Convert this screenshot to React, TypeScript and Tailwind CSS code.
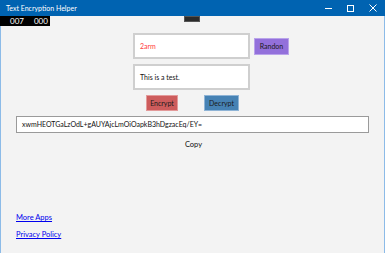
import { FC } from 'react'

const font = "[font-family:'Lato','Noto_Sans',sans-serif]"

const TitleBar: FC = () => (
    <div className="flex h-[16px] items-center bg-[#0063b1] text-white">
        <span className="pl-[6px] text-[7px] leading-none">Text Encryption Helper</span>
        <div className="ml-auto flex h-full items-center">
            {/* minimize */}
            <div className="flex h-full w-[22px] items-center justify-center">
                <div className="h-px w-[7px] bg-white" />
            </div>
            {/* maximize */}
            <div className="flex h-full w-[22px] items-center justify-center">
                <div className="h-[7px] w-[7px] border border-white" />
            </div>
            {/* close */}
            <div className="flex h-full w-[24px] items-center justify-center">
                <svg width="8" height="8" viewBox="0 0 8 8" stroke="white" strokeWidth="1">
                    <path d="M0.5 0.5 L7.5 7.5 M7.5 0.5 L0.5 7.5" />
                </svg>
            </div>
        </div>
    </div>
)

const App: FC = () => {
    return (
        <div className={`relative h-[253px] w-[385px] overflow-hidden bg-[#f3f3f3] ${font}`}>
            <TitleBar />
            <div className="flex h-[237px] flex-col border-x border-[#8cbbe8] text-[7px] text-[#111]">
                {/* key row */}
                <div className="mt-[17px] flex items-center">
                    <div className="ml-[132px] flex h-[26px] w-[117px] items-center border-2 border-[#cfcfcf] bg-white pl-[5px] text-[7px] text-[#ff3b3b]">
                        2arm
                    </div>
                    <button className="ml-[4px] h-[17px] w-[35px] border border-[#b9a3ea] bg-[#9370db] text-[7px] text-[#1a1a1a]">
                        Randon
                    </button>
                </div>
                {/* plain text */}
                <div className="ml-[132px] mt-[5px] flex h-[26px] w-[117px] items-center border-2 border-[#cfcfcf] bg-white pl-[5px] text-[7px]">
                    This is a test.
                </div>
                {/* actions */}
                <div className="mt-[5px] flex">
                    <button className="ml-[145px] h-[16px] w-[32px] border border-[#e39a9a] bg-[#cd5c5c] text-[7px] text-[#1a1a1a]">
                        Encrypt
                    </button>
                    <button className="ml-[26px] h-[16px] w-[35px] border border-[#8fb4d6] bg-[#4682b4] text-[7px] text-[#1a1a1a]">
                        Decrypt
                    </button>
                </div>
                {/* result */}
                <div className="ml-[15px] mt-[5px] flex h-[17px] w-[353px] items-center border border-[#9a9a9a] bg-white pl-[5px]">
                    xwmHEOTGaLzOdL+gAUYAjcLmOiOapkB3hDgzacEq/EY=
                </div>
                <div className="mt-[6px] flex justify-center pl-[2px] text-[7.5px] leading-[12px]">
                    <span>Copy</span>
                </div>
                <div className="ml-[15px] mt-[61px] flex flex-col gap-[5px] text-[7.5px] leading-[12px] text-[#0000ee]">
                    <a className="underline" href="#">More Apps</a>
                    <a className="underline" href="#">Privacy Policy</a>
                </div>
            </div>

            {/* frame counter overlay */}
            <div className="absolute left-0 top-[16px] flex h-[10px] w-[50px] items-center bg-black text-[8px] leading-none text-white">
                <span className="ml-[10px]">007</span>
                <span className="ml-[10px]">000</span>
            </div>
            <div className="absolute left-[184px] top-[16px] h-[6px] w-[16px] border border-[#555] bg-[#2b2b2b]" />
        </div>
    )
}

export default App
